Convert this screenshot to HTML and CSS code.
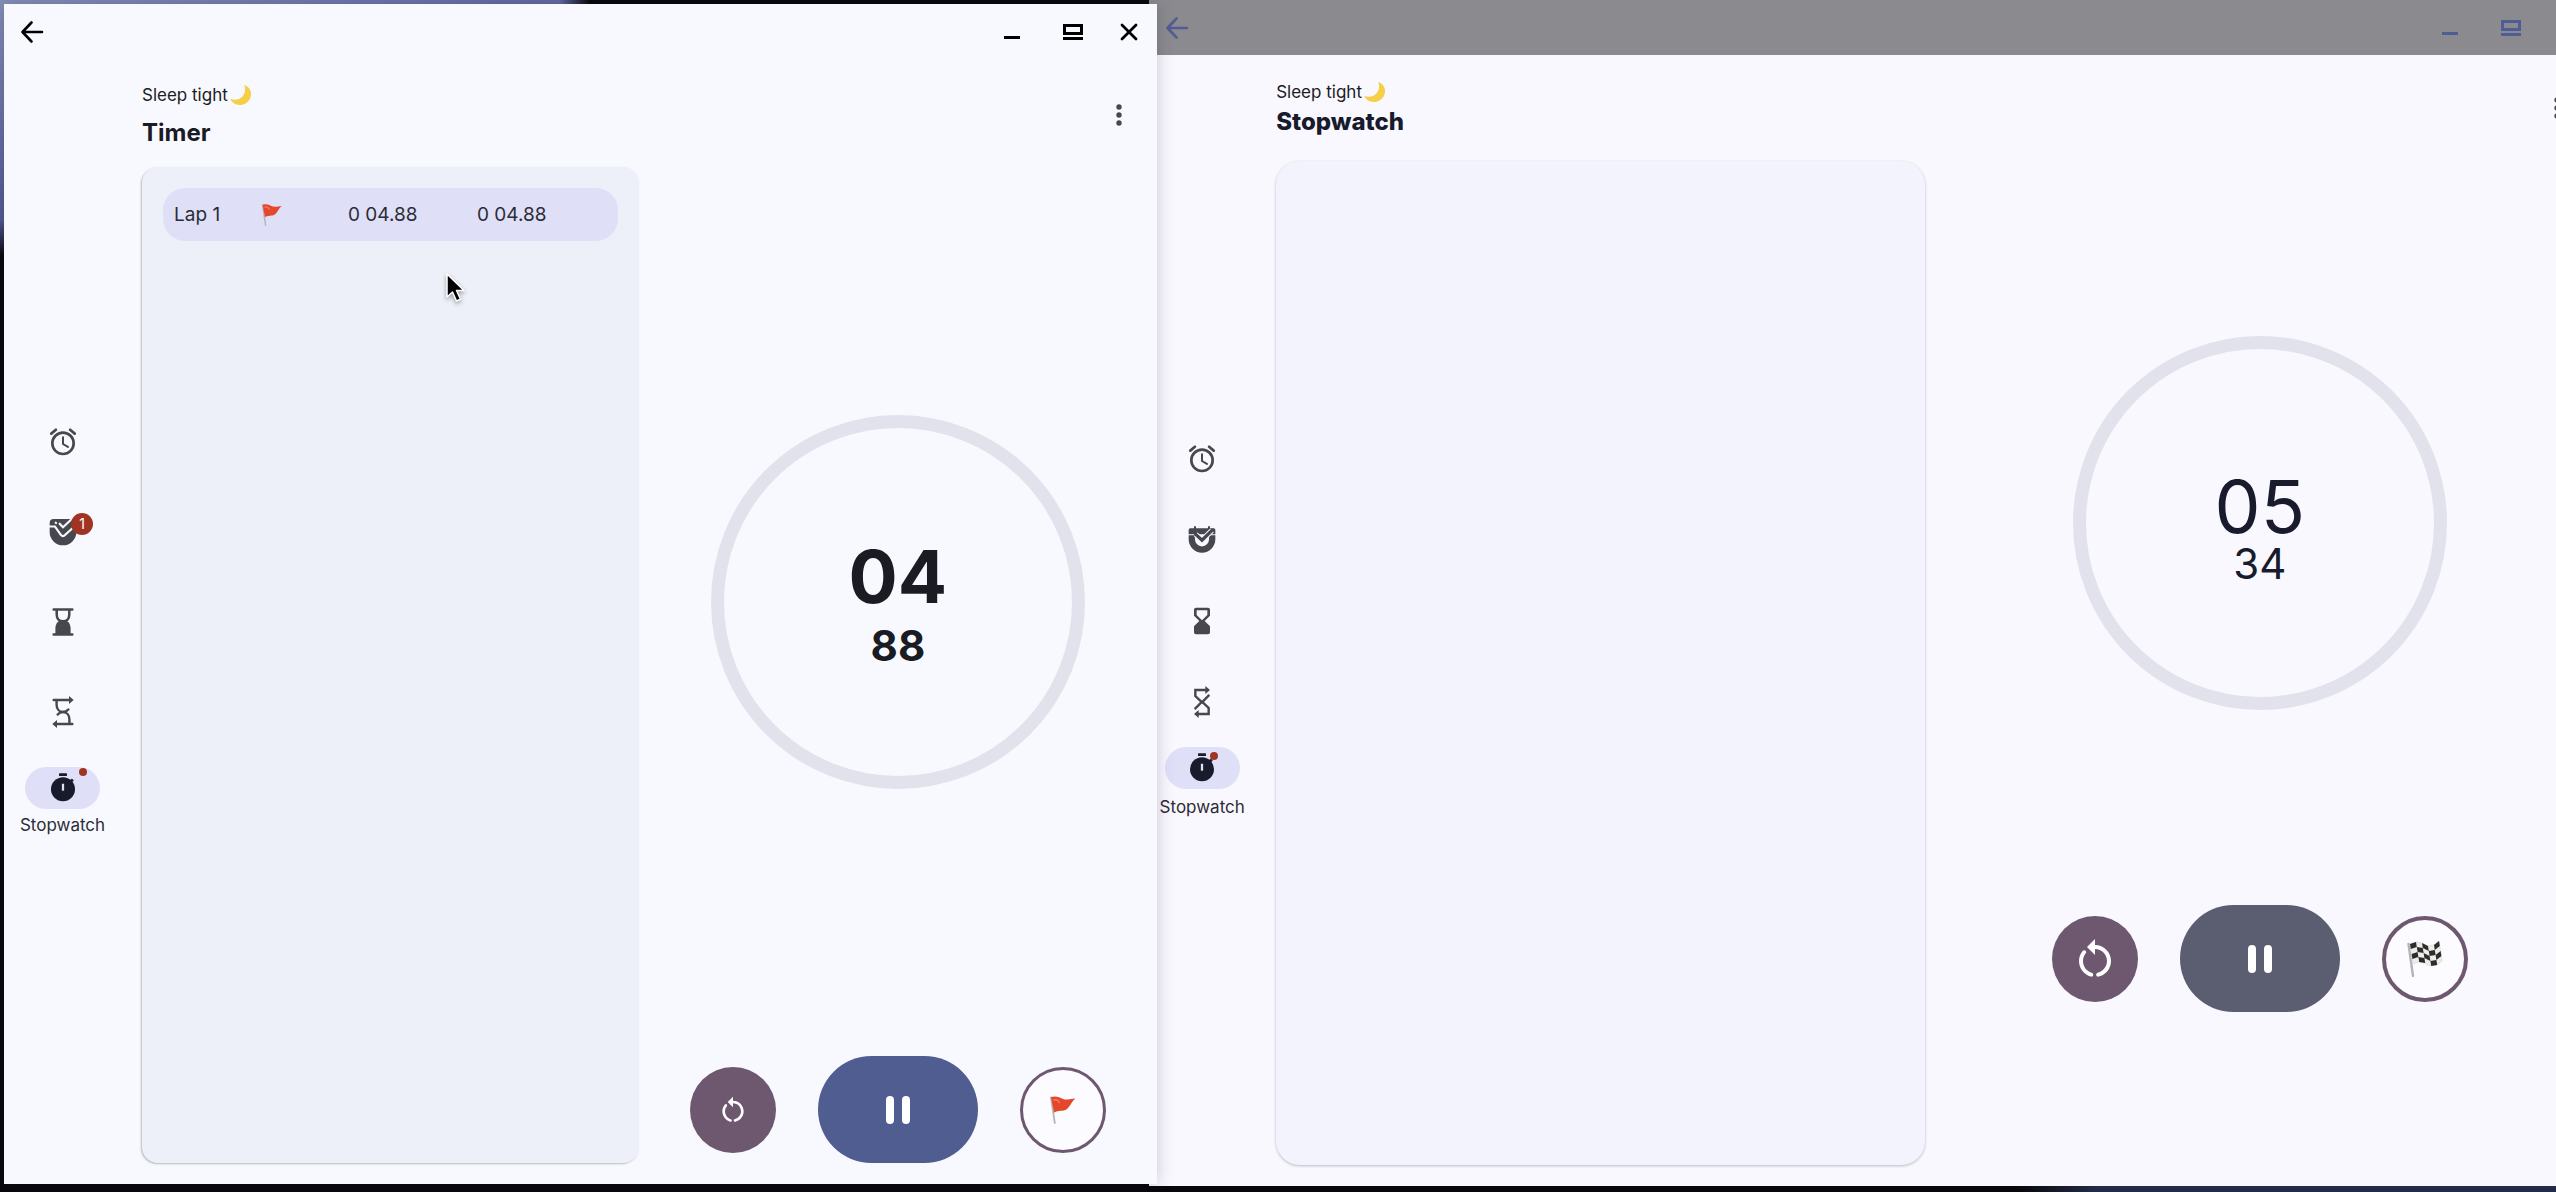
FILE: index.html
```
<!DOCTYPE html>
<html lang="en">
<head>
    <meta charset="UTF-8">
    <meta name="viewport" content="width=device-width, initial-scale=1.0">
    <title>Stopwatch</title>
    <link rel="stylesheet" href="styles.css">
</head>
<body>
    <!-- shared icons -->
    <svg class="sprite" aria-hidden="true">
        <symbol id="i-back" viewBox="0 0 24 24">
            <path d="M22 12H3M11.500 2.500L2.500 12l9 9.500" fill="none" stroke="currentColor" stroke-width="2.600" stroke-linecap="round" stroke-linejoin="round"/>
        </symbol>
        <symbol id="i-min" viewBox="0 0 24 24">
            <path d="M4 17.500h16" stroke="currentColor" stroke-width="3"/>
        </symbol>
        <symbol id="i-max" viewBox="0 0 24 24">
            <path d="M3.500 5.500h17v8h-17zM2 18.500h20" fill="none" stroke="currentColor" stroke-width="3"/>
        </symbol>
        <symbol id="i-close" viewBox="0 0 24 24">
            <path d="M5 5l14 14M19 5L5 19" stroke="currentColor" stroke-width="2.800" stroke-linecap="round"/>
        </symbol>
        <symbol id="i-more" viewBox="0 0 24 24">
            <circle cx="12" cy="4" r="2.700"/><circle cx="12" cy="12" r="2.700"/><circle cx="12" cy="20" r="2.700"/>
        </symbol>
        <symbol id="i-moon" viewBox="0 0 24 24">
            <path d="M15.500 1C22 3 25 10 21.500 16.500 18 23 9 25 3.500 20.500 1.800 19 .8 17.500.5 16c4 1.800 9.500 1.500 13-2.500 3.300-3.800 3.700-8.500 2-12.500z" fill="#f5cf48"/>
        </symbol>
        <symbol id="i-flag" viewBox="0 0 26 28">
            <path d="M1 1.500l3.800 25.500" stroke="#b4b4b8" stroke-width="1.800" stroke-linecap="round"/>
            <path d="M1 1C6-.5 9 1 13 3c4 1.500 8-.5 12.500-.5C22 5 21 8.500 18 12c-3.500 4-7 1.500-14 4.500z" fill="#e4472b"/>
            <path d="M4 4c2.500-.8 4 0 5.500 2.500" fill="none" stroke="#f3806c" stroke-width="1.400" stroke-linecap="round"/>
        </symbol>
        <symbol id="i-finish" viewBox="0 0 36 36">
            <path d="M1.500 3L6 35" stroke="#b4b4b6" stroke-width="2.400" stroke-linecap="round"/>
            <path d="M3 3l6-2 6 1 6 3 6-1 5-4 3 20-5.600 4-6 1-6-3-6-1-6 2z" fill="#efede8" stroke="#c9c7c3" stroke-width=".5"/>
            <path d="M3 3l6-2 .8 5-6 2zM15 2l6 3 .8 5-6-3zM27 4l5-4 .8 5-5 4zM9.800 6l6 1 .8 5-6-1zM21.800 10l6-1 .8 5-6 1zM4.600 13l6-2 .8 5-6 2zM16.600 12l6 3 .8 5-6-3zM28.600 14l5-4 .8 5-5 4zM11.400 16l6 1 .8 5-6-1zM23.400 20l6-1 .8 5-6 1z" fill="#2d2d2d"/>
        </symbol>
        <symbol id="i-alarm" viewBox="0 0 24 24">
            <circle cx="12" cy="13" r="8" fill="none" stroke="currentColor" stroke-width="2"/>
            <path d="M12 8.500v5l3.700 2.200" fill="none" stroke="currentColor" stroke-width="1.500" stroke-linecap="round"/>
            <path d="M3.200 5.700l3.500-2.900M20.800 5.700l-3.500-2.900" stroke="currentColor" stroke-width="2" stroke-linecap="round"/>
        </symbol>
        <symbol id="i-hourglass-round" viewBox="0 0 24 24">
            <path d="M5 2.700h14M5 21.300h14M7.300 3v3.500c0 3 2 5 4.700 5s4.700-2 4.700-5V3" fill="none" stroke="currentColor" stroke-width="1.900" stroke-linecap="round"/>
            <path d="M6.300 21v-4c0-4 2.400-6.500 5.700-6.500s5.700 2.500 5.700 6.500v4z"/>
        </symbol>
        <symbol id="i-hourglass" viewBox="0 0 24 24">
            <path d="M18 20.500V16l-4-4 4-4V3.500C18 2.700 17.300 2 16.500 2h-9C6.700 2 6 2.700 6 3.500V8l4 4-4 4v4.500c0 .8.700 1.500 1.500 1.500h9c.8 0 1.500-.7 1.500-1.500zM8 7.500V4h8v3.500l-4 4z"/>
        </symbol>
        <symbol id="i-cycle-round" viewBox="0 0 24 24">
            <g fill="none" stroke="currentColor" stroke-width="1.800" stroke-linecap="round">
                <path d="M5 3h13M7.200 3v3.500c0 3 1.800 5.500 4.800 5.500 1.800 0 3-.7 4-1.900"/>
                <path d="M19 21H6M16.800 21v-3.500c0-3-1.800-5.500-4.800-5.500-1.800 0-3 .7-4 1.900"/>
            </g>
            <path d="M16.500 0L20 3l-3.500 3zM7.500 18L4 21l3.500 3z"/>
        </symbol>
        <symbol id="i-cycle" viewBox="0 0 24 24">
            <g fill="none" stroke="currentColor" stroke-width="1.800">
                <path d="M15 3H7v4.500l5 4.700 5.500-5.500M9 21h8v-4.500l-5-4.700-5.500 5.500"/>
            </g>
            <path d="M14.500 0L18 3l-3.500 3zM9.500 18L6 21l3.500 3z"/>
        </symbol>
        <symbol id="i-stopwatch" viewBox="0 0 24 24">
            <rect x="9" y="1" width="6" height="2" rx=".3"/>
            <path d="M17.500 7.500L19.400 5.600" stroke="currentColor" stroke-width="2"/>
            <circle cx="12" cy="13" r="9"/>
            <path d="M12 8.800v5.200" stroke="#dfe0f8" stroke-width="1.700"/>
        </symbol>
        <symbol id="i-restart" viewBox="0 0 24 24">
            <path d="M12 5V2L8 6l4 4V7c3.310 0 6 2.690 6 6 0 2.800-1.900 5.100-4.500 5.800-.6.200-1 .6-.9 1.200.1.600.7 1 1.300.8C17.500 19.900 20 16.700 20 13c0-4.420-3.580-8-8-8z"/>
            <path d="M6 13c0-1.400.5-2.700 1.300-3.700.4-.5.400-1 0-1.400-.4-.5-1.100-.4-1.500.1C4.700 9.400 4 11.100 4 13c0 3.700 2.500 6.800 5.900 7.800.6.200 1.200-.2 1.200-.9 0-.5-.3-.9-.8-1C7.800 18.100 6 15.800 6 13z"/>
        </symbol>
        <symbol id="i-pause" viewBox="0 0 24 28">
            <rect width="8" height="28" rx="4"/><rect x="16" width="8" height="28" rx="4"/>
        </symbol>
        <symbol id="i-pointer" viewBox="0 0 20 30">
            <path d="M2 1v23l5.500-5 4 9 4-1.800-4-8.700h7.500z" fill="#000" stroke="#fff" stroke-width="1.500" stroke-linejoin="round"/>
        </symbol>
    </svg>

    <div class="desktop">
        <section class="window window-back">
            <div class="titlebar">
                <button class="icon-btn" aria-label="Back"><svg><use href="#i-back"/></svg></button>
                <div class="window-btns">
                    <button class="icon-btn min" aria-label="Minimize"><svg><use href="#i-min"/></svg></button>
                    <button class="icon-btn" aria-label="Maximize"><svg><use href="#i-max"/></svg></button>
                    <button class="icon-btn" aria-label="Close"><svg><use href="#i-close"/></svg></button>
                </div>
            </div>
            <div class="body">
                <nav class="rail">
                    <a class="rail-item" href="#" aria-label="Alarm"><span class="pill"><svg><use href="#i-alarm"/></svg></span></a>
                    <a class="rail-item" href="#" aria-label="Tasks"><span class="pill">
                        <svg viewBox="0 0 24 24">
                            <path d="M2 7.700V4.500C2 3.700 2.700 3.200 3.500 3.200H6V1.700h1.500v1.500h9V1.700H18v1.500h2.500c.8 0 1.500.5 1.500 1.300v3.200z"/>
                            <path d="M2 8.500h4.700v3a5.300 5.300 0 0 0 10.600 0v-3H22v3a10 10 0 0 1-20 0z"/>
                            <path d="M7.300 7.800L12 12.200l7.500-7.400" fill="none" stroke="#f9f8ff" stroke-width="4"/>
                            <path d="M7.300 7.800L12 12.200l7.500-7.400" fill="none" stroke="currentColor" stroke-width="2.500" stroke-linecap="round"/>
                        </svg>
                    </span></a>
                    <a class="rail-item" href="#" aria-label="Timer"><span class="pill"><svg><use href="#i-hourglass"/></svg></span></a>
                    <a class="rail-item" href="#" aria-label="Interval"><span class="pill"><svg><use href="#i-cycle"/></svg></span></a>
                    <a class="rail-item active" href="#"><span class="pill"><svg><use href="#i-stopwatch"/></svg><span class="dot"></span></span>Stopwatch</a>
                </nav>
                <main class="main">
                    <header class="head">
                        <div class="titles">
                            <p class="greeting">Sleep tight<svg><use href="#i-moon"/></svg></p>
                            <h1>Stopwatch</h1>
                        </div>
                        <button class="icon-btn more" aria-label="More"><svg><use href="#i-more"/></svg></button>
                    </header>
                    <div class="content">
                        <div class="laps"></div>
                        <div class="clock">
                            <div class="dial-wrap">
                                <div class="dial">
                                    <span class="sec">05</span>
                                    <span class="ms">34</span>
                                </div>
                            </div>
                            <div class="controls">
                                <button class="round reset" aria-label="Reset"><svg><use href="#i-restart"/></svg></button>
                                <button class="pause" aria-label="Pause"><svg><use href="#i-pause"/></svg></button>
                                <button class="round lap" aria-label="Lap"><svg><use href="#i-finish"/></svg></button>
                            </div>
                        </div>
                    </div>
                </main>
            </div>
        </section>

        <section class="window window-front">
            <div class="titlebar">
                <button class="icon-btn" aria-label="Back"><svg><use href="#i-back"/></svg></button>
                <div class="window-btns">
                    <button class="icon-btn min" aria-label="Minimize"><svg><use href="#i-min"/></svg></button>
                    <button class="icon-btn" aria-label="Maximize"><svg><use href="#i-max"/></svg></button>
                    <button class="icon-btn" aria-label="Close"><svg><use href="#i-close"/></svg></button>
                </div>
            </div>
            <div class="body">
                <nav class="rail">
                    <a class="rail-item" href="#" aria-label="Alarm"><span class="pill"><svg><use href="#i-alarm"/></svg></span></a>
                    <a class="rail-item" href="#" aria-label="Tasks"><span class="pill">
                        <svg viewBox="0 0 24 24">
                            <path d="M2 5.200a3 3 0 0 1 3-3h17v9.800a10 10 0 0 1-20 0z"/>
                            <path d="M1.500 7.900H6L10.500 14.300c.9 1 2.100 1 3 0L22 6.500M6.500 5l.3.300M9.500 5.800l2.500 2.700L18 2.800" fill="none" stroke="#f8f9ff" stroke-width="1.600" stroke-linecap="round"/>
                        </svg>
                        <span class="badge">1</span>
                    </span></a>
                    <a class="rail-item" href="#" aria-label="Timer"><span class="pill"><svg><use href="#i-hourglass-round"/></svg></span></a>
                    <a class="rail-item" href="#" aria-label="Interval"><span class="pill"><svg><use href="#i-cycle-round"/></svg></span></a>
                    <a class="rail-item active" href="#"><span class="pill"><svg><use href="#i-stopwatch"/></svg><span class="dot"></span></span>Stopwatch</a>
                </nav>
                <main class="main">
                    <header class="head">
                        <div class="titles">
                            <p class="greeting">Sleep tight<svg><use href="#i-moon"/></svg></p>
                            <h1>Timer</h1>
                        </div>
                        <button class="icon-btn more" aria-label="More"><svg><use href="#i-more"/></svg></button>
                    </header>
                    <div class="content">
                        <div class="laps">
                            <table>
                                <tr>
                                    <td class="col-name">Lap 1</td>
                                    <td class="col-flag"><svg><use href="#i-flag"/></svg></td>
                                    <td class="col-time">0 04.88</td>
                                    <td>0 04.88</td>
                                </tr>
                            </table>
                        </div>
                        <div class="clock">
                            <div class="dial-wrap">
                                <div class="dial">
                                    <span class="sec">04</span>
                                    <span class="ms">88</span>
                                </div>
                            </div>
                            <div class="controls">
                                <button class="round reset" aria-label="Reset"><svg><use href="#i-restart"/></svg></button>
                                <button class="pause" aria-label="Pause"><svg><use href="#i-pause"/></svg></button>
                                <button class="round lap" aria-label="Lap"><svg><use href="#i-flag"/></svg></button>
                            </div>
                        </div>
                    </div>
                </main>
            </div>
        </section>

        <svg class="pointer"><use href="#i-pointer"/></svg>
    </div>
</body>
</html>
```
FILE: styles.css
```
*{
    box-sizing: border-box;
}
body{
    margin: 0;
    font-family: Inter, Roboto, sans-serif;
    font-size: 17px;
    color: #1a1b23;
}
p,h1{
    margin: 0;
}
svg{
    display: block;
    fill: currentColor;
}
.sprite{
    position: absolute;
    width: 0;
    height: 0;
}

.desktop{
    position: relative;
    height: 100vh;
    overflow: hidden;
    background:
        linear-gradient(to right, #8490b8, #5f6ca4 560px, transparent 590px) top / 100% 4px no-repeat,
        linear-gradient(#8490b8, #4f5b94 220px, transparent 256px) left / 4px 100% no-repeat,
        linear-gradient(to right, transparent 79%, #222c46 82%) bottom / 100% 6px no-repeat,
        #08080c;
}

/* windows */
.window{
    position: absolute;
    display: flex;
    flex-direction: column;
}
.window-front{
    top: 4px;
    left: 4px;
    right: calc(55% - 7px);
    bottom: 8px;
    background: #f8f9ff;
    box-shadow: 0 0 16px rgba(30, 20, 50, .22);
}
.window-back{
    top: 0;
    left: calc(45% - 1px);
    right: -39px;
    bottom: 6px;
    background: #f9f8ff;
}

.titlebar{
    display: flex;
    justify-content: space-between;
    align-items: center;
    height: 56px;
    padding: 0 16px;
    color: #000;
}
.window-back .titlebar{
    height: 55px;
    background: #8b8b8f;
    color: #505c94;
}
.window-btns{
    display: flex;
    gap: 32px;
}
.min{
    margin-right: 5px;
}
.icon-btn{
    padding: 0;
    border: 0;
    background: none;
    color: inherit;
}
.icon-btn svg{
    width: 24px;
    height: 24px;
}

.body{
    flex: 1;
    display: flex;
}

/* navigation rail */
.rail{
    width: 117px;
    display: flex;
    flex-direction: column;
    justify-content: center;
}
.window-back .rail{
    width: 106px;
}
.rail-item{
    height: 90px;
    display: flex;
    flex-direction: column;
    align-items: center;
    justify-content: center;
    gap: 4px;
    line-height: 24px;
    color: #46474f;
    text-decoration: none;
}
.window-back .rail-item{
    height: 81px;
    gap: 6px;
}
.pill{
    position: relative;
    width: 75px;
    height: 42px;
    display: flex;
    align-items: center;
    justify-content: center;
    border-radius: 21px;
}
.pill svg{
    width: 32px;
    height: 32px;
}
.active{
    color: #2b2c34;
}
.active .pill{
    background: #dfe0f8;
    color: #171b2c;
}
.dot{
    position: absolute;
    top: 1px;
    right: 13px;
    width: 8px;
    height: 8px;
    border-radius: 50%;
    background: #a03423;
}
.window-back .dot{
    top: 5px;
    right: 22px;
}
.badge{
    position: absolute;
    top: 2px;
    left: 46px;
    width: 22px;
    height: 22px;
    border-radius: 50%;
    background: #a03423;
    color: #fff;
    font-size: 14px;
    line-height: 22px;
    text-align: center;
}

/* page */
.main{
    flex: 1;
    display: flex;
    flex-direction: column;
    padding: 22px 0 21px 21px;
}
.head{
    display: flex;
    justify-content: space-between;
    align-items: center;
    padding: 0 26px 19px 0;
}
.titles{
    display: grid;
    gap: 10px;
}
.greeting{
    display: flex;
    align-items: center;
    gap: 2px;
    line-height: 26px;
}
.greeting svg{
    width: 22px;
    height: 22px;
}
h1{
    font-size: 24px;
    line-height: 30px;
    font-weight: 700;
}
.more{
    color: #46474f;
}
.window-back .main{
    padding-top: 24px;
}
.window-back .head{
    padding-bottom: 24px;
}
.window-back .titles{
    gap: 2px;
}
.window-back h1{
    font-weight: 800;
    color: #171b2c;
}

.content{
    flex: 1;
    display: grid;
    grid-template-columns: calc(50% - 11px) 1fr;
}
.laps{
    padding: 21px;
    border-radius: 16px;
    background: #edf0f9;
    box-shadow: -1px 1px 2px rgba(0, 0, 0, .25);
}
.window-back .laps{
    border-radius: 24px;
    background: #f2f3fd;
    box-shadow: 0 1px 3px rgba(0, 0, 0, .25);
}
table{
    width: 100%;
    height: 53px;
    table-layout: fixed;
    border-collapse: collapse;
    border-radius: 22px;
    background: #dfe0f8;
    color: #2b2c34;
    font-size: 19px;
}
td{
    padding: 0;
}
.col-name{
    width: 98px;
    padding-left: 11px;
}
.col-flag{
    width: 87px;
}
.col-flag svg{
    width: 22px;
    height: 22px;
}
.col-time{
    width: 129px;
}

/* dial and controls */
.clock{
    display: flex;
    flex-direction: column;
    gap: 20px;
}
.window-back .clock{
    padding-bottom: 153px;
}
.dial-wrap{
    flex: 1;
    display: flex;
    align-items: center;
    justify-content: center;
}
.dial{
    width: 374px;
    height: 374px;
    display: flex;
    flex-direction: column;
    align-items: center;
    justify-content: center;
    border: 13px solid #e2e2ec;
    border-radius: 50%;
    font-weight: 700;
}
.sec{
    font-size: 73px;
    line-height: 88px;
}
.ms{
    font-size: 42px;
    line-height: 50px;
}
.window-back .dial{
    padding-top: 10px;
    font-weight: 400;
    color: #171b2c;
}
.window-back .sec{
    line-height: 72px;
}
.window-back .ms{
    line-height: 42px;
}

.controls{
    display: flex;
    align-items: center;
    justify-content: center;
    gap: 42px;
}
.controls button{
    display: flex;
    align-items: center;
    justify-content: center;
    padding: 0;
    border: 0;
    color: #fff;
}
.controls .round{
    width: 86px;
    height: 86px;
    border-radius: 50%;
}
.controls .reset{
    background: #6e5870;
}
.controls .pause{
    width: 160px;
    height: 107px;
    border-radius: 54px;
    background: #505d91;
}
.window-back .controls .pause{
    background: #5b5e71;
}
.controls .lap{
    border: 3px solid #6e5870;
    background: #fcfbff;
}
.window-back .controls .lap{
    border-width: 4px;
}
.reset svg{
    width: 32px;
    height: 32px;
}
.window-back .reset svg{
    width: 48px;
    height: 48px;
}
.pause svg{
    width: 24px;
    height: 28px;
}
.lap svg{
    width: 26px;
    height: 28px;
}
.window-back .lap svg{
    width: 36px;
    height: 36px;
}

.pointer{
    position: absolute;
    top: 272px;
    left: 445px;
    width: 20px;
    height: 32px;
    filter: drop-shadow(0 2px 2px rgba(0, 0, 0, .35));
}
```
